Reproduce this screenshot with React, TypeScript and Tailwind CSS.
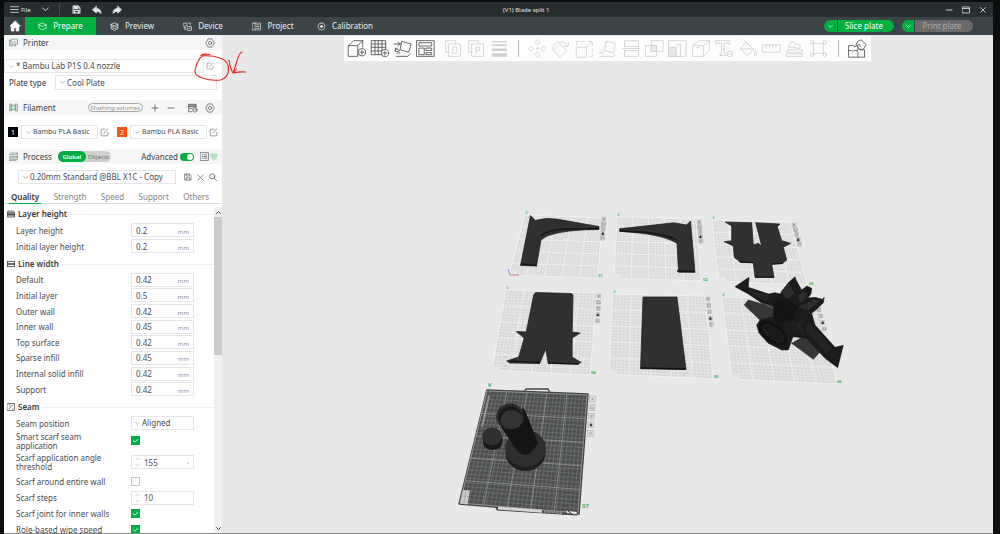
import React, { useId, useState } from "react";

type Pt = [number, number];

/* ---------- small drawing helpers ---------- */

function Icon({ children, className = "size-[10px]", vb = 16, sw = 1.2 }: { children: React.ReactNode; className?: string; vb?: number; sw?: number }) {
  return (
    <svg viewBox={`0 0 ${vb} ${vb}`} className={`shrink-0 ${className}`} fill="none" stroke="currentColor" strokeWidth={sw} strokeLinejoin="round" strokeLinecap="round" aria-hidden="true">
      {children}
    </svg>
  );
}

const Chevron = ({ className = "size-[6px] text-[#9a9a9a]" }: { className?: string }) => (
  <Icon className={className} vb={10} sw={1.3}><path d="M1 3l4 3.6L9 3" /></Icon>
);

const GearHex = () => (
  <Icon className="size-[10px]" sw={1.1}>
    <path d="M5 1.500h6l1.200 2L15 8l-2.800 4.500-1.200 2H5l-1.200-2L1 8l2.800-4.500z" />
    <circle cx="8" cy="8" r="2.600" />
  </Icon>
);

const EditIcon = ({ className = "size-[9px]" }: { className?: string }) => (
  <Icon className={className} sw={1.3}>
    <path d="M9 2H3.500Q2 2 2 3.500v9Q2 14 3.500 14h9q1.500 0 1.500-1.500V8" />
    <path d="M7 9l7-7.500" />
  </Icon>
);

const SaveIcon = ({ className, solid = false }: { className: string; solid?: boolean }) => (
  <Icon className={className} sw={solid ? 2 : 1.4}>
    <path d="M2 2h9l3 3v9H2z" />
    <path d="M4.500 2v4h6V2" fill={solid ? "currentColor" : "none"} />
    <path d="M4.500 14V9.500h7V14" />
  </Icon>
);

/* ---------- title bar and navigation ---------- */

function TitleBar() {
  return (
    <header className="relative flex h-[15px] shrink-0 items-center bg-[#262e30] px-[6px] text-[#e3e6e6]">
      <button className="flex items-center gap-[2px] text-[6px] leading-[10px]">
        <Icon className="size-[9px]" sw={1.4}><path d="M1 3h14M1 8h14M1 13h14" /></Icon>
        File
      </button>
      <button aria-label="More" className="ml-[11px]"><Chevron className="size-[7px]" /></button>
      <span className="ml-[10px] h-[11px] w-px bg-[#454c4e]" />
      <button aria-label="Save" className="ml-[12px]"><SaveIcon className="size-[9px]" solid /></button>
      <button aria-label="Undo" className="ml-[11px]">
        <Icon className="size-[10px]"><path d="M7 2.500v3q7 .2 7.500 8Q11 9.800 7 10v3L1 7.800z" fill="currentColor" /></Icon>
      </button>
      <button aria-label="Redo" className="ml-[10px]">
        <Icon className="size-[10px]"><path d="M9 2.500v3q-7 .2-7.500 8Q5 9.800 9 10v3l6-5.200z" fill="currentColor" /></Icon>
      </button>
      <h1 className="absolute left-[499px] text-[6px] leading-[10px]">(V1) Blade split 1</h1>
      <div className="ml-auto flex items-center gap-[9px]">
        <button aria-label="Minimise"><Icon className="size-[8px]"><path d="M3 8h11" strokeWidth="1.800" /></Icon></button>
        <button aria-label="Maximise"><Icon className="size-[8px]" sw={1.600}><path d="M1 2h14v12H1zM1 5h14" /></Icon></button>
        <button aria-label="Close"><Icon className="size-[8px]" sw={1.500}><path d="M3 3l10 10M13 3L3 13" /></Icon></button>
      </div>
    </header>
  );
}

const navItems = [
  { name: "Prepare", icon: <path d="M8 2l6.500 3v6L8 14l-6.500-3V5zM1.500 5L8 8l6.500-3" />, width: "w-[71px]" },
  { name: "Preview", icon: <path d="M2 4l6-2.500L14 4 8 6.500zM2 4v2.600L8 9l6-2.400V4M2 7v2.600L8 12l6-2.400V7M2 10v2.200L8 15l6-2.800V10" />, width: "w-[72px]" },
  { name: "Device", icon: <path d="M1 2h6v5H1zM3 10v3h3M10 2h3v3M9 8h6v7H9zM11 11h2M1.500 10h3" />, width: "w-[70px]" },
  { name: "Project", icon: <path d="M1 2h14v12H1zM5.500 2v12M8 5h4.500M8 8h4.500M8 11h4.500" />, width: "w-[70px]" },
  { name: "Calibration", icon: <><path d="M8 1l1.500 1.700 2.400-.3.500 2.300 2 1.300L13.500 8l.9 2-2 1.300-.5 2.300-2.400-.3L8 15l-1.500-1.700-2.400.3-.5-2.300-2-1.300.9-2-.9-2 2-1.300.5-2.300 2.400.3z" /><circle cx="8" cy="8" r="2" fill="currentColor" /></>, width: "w-[74px]" },
];

function NavBar() {
  const [active, setActive] = useState("Prepare");
  return (
    <nav className="flex h-[18px] shrink-0 items-stretch bg-[#3b4446] text-[8px] leading-[12px] text-[#eceeee]">
      <button aria-label="Home" className="grid w-[21px] place-items-center text-white">
        <Icon className="size-[12px]"><path d="M8 1.500L1.500 8H3v6.500h3.500V10h3v4.500H13V8h1.500z" fill="currentColor" /></Icon>
      </button>
      {navItems.map((n) => (
        <button key={n.name} onClick={() => setActive(n.name)} className={`flex items-center justify-center gap-[6px] ${n.width} ${active === n.name ? "bg-[#00ae42] text-white" : ""}`}>
          <Icon className="size-[9px]">{n.icon}</Icon>
          {n.name}
        </button>
      ))}
      <div className="ml-auto mr-[20px] flex items-center gap-[8px]">
        <div className="flex h-[12px] w-[70px] gap-px overflow-hidden rounded-full text-white">
          <button aria-label="Slice options" className="grid w-[13px] place-items-center bg-[#00ae42]"><Chevron className="size-[5px]" /></button>
          <button className="flex flex-1 items-center justify-center bg-[#00ae42] pr-[4px]">Slice plate</button>
        </div>
        <div className="flex h-[12px] w-[71px] gap-px overflow-hidden rounded-full">
          <button aria-label="Print options" className="grid w-[12px] place-items-center bg-[#00ae42] text-white"><Chevron className="size-[5px]" /></button>
          <button className="flex flex-1 items-center justify-center bg-[#6b6b6b] pr-[4px] text-[#a9a9a9]">Print plate</button>
        </div>
      </div>
    </nav>
  );
}

/* ---------- sidebar ---------- */

function PickBox({ label, value, className = "" }: { label: string; value: string; className?: string }) {
  return (
    <div className={`relative flex items-center border border-[#e6e6e6] bg-white ${className}`}>
      <span className="pointer-events-none absolute left-[4px]"><Chevron className="size-[5px] text-[#9a9a9a]" /></span>
      <select aria-label={label} className="h-full w-full appearance-none bg-transparent pl-[11px] outline-none">
        <option>{value}</option>
      </select>
    </div>
  );
}

function SectionBar({ icon, title, children }: { icon: React.ReactNode; title: string; children: React.ReactNode }) {
  return (
    <div className="flex h-[15px] items-center bg-[#f6f6f6] pl-[5px] pr-[7px] text-[#4f5557]">
      <span className="text-[#6f8577]">{icon}</span>
      <h2 className="ml-[5px] text-[8px] leading-[12px] text-[#3c4345]">{title}</h2>
      {children}
    </div>
  );
}

function Tick({ id, on }: { id: string; on: boolean }) {
  return (
    <span className="relative grid size-[9px] place-items-center">
      <input id={id} type="checkbox" defaultChecked={on} className="peer size-[9px] appearance-none border border-[#c4c4c4] bg-white checked:border-[#00ae42] checked:bg-[#00ae42]" />
      <span className="pointer-events-none absolute hidden text-white peer-checked:block">
        <Icon className="size-[7px]" vb={10} sw={1.2}><path d="M1.500 5l2.500 2.300L8.500 3.500" /></Icon>
      </span>
    </span>
  );
}

type Kind = "number" | "select" | "check" | "spin";

function Row({ label, kind, value = "", unit = "", on = false, height = "h-[16px]" }: { label: string; kind: Kind; value?: string; unit?: string; on?: boolean; height?: string }) {
  const id = useId();
  return (
    <div className={`flex items-center ${height}`}>
      <label htmlFor={id} className="w-[115px] shrink-0 text-[8px] leading-[9px] whitespace-nowrap">
        {label.split("|").map((part) => <span key={part} className="block">{part}</span>)}
      </label>
      {kind === "check" && <Tick id={id} on={on} />}
      {kind === "select" && (
        <div className="relative flex h-[14px] w-[63px] items-center border border-[#e6e6e6]">
          <span className="pointer-events-none absolute left-[3px]"><Chevron className="size-[5px] text-[#9a9a9a]" /></span>
          <select id={id} className="h-full w-full appearance-none bg-transparent pl-[10px] text-[8px] outline-none"><option>{value}</option></select>
        </div>
      )}
      {(kind === "number" || kind === "spin") && (
        <div className="flex h-[14px] w-[63px] items-center border border-[#e6e6e6] px-[4px]">
          {kind === "spin" && (
            <span className="mr-[4px] -ml-px flex flex-col gap-[2px] text-[#a8a8a8]">
              <Icon className="h-[4px] w-[5px]" vb={10} sw={1.6}><path d="M1 7l4-4 4 4" /></Icon>
              <Icon className="h-[4px] w-[5px]" vb={10} sw={1.6}><path d="M1 3l4 4 4-4" /></Icon>
            </span>
          )}
          <input id={id} defaultValue={value} className="h-full min-w-0 flex-1 bg-transparent text-[8px] outline-none" />
          <span className="pt-[3px] text-[6px] leading-[8px] text-[#929292]">{unit}</span>
        </div>
      )}
    </div>
  );
}

function GroupTitle({ icon, title }: { icon: React.ReactNode; title: string }) {
  return (
    <div className="flex h-[14px] items-center gap-[3px] pl-[3px] text-[#3a3a3a]">
      <Icon className="size-[8px]" sw={1.5}>{icon}</Icon>
      <h3 className="text-[8px] leading-[12px] font-semibold">{title}</h3>
      <span className="h-px flex-1 bg-[#f0f0f0]" />
    </div>
  );
}

const lineWidths: [string, string][] = [
  ["Default", "0.42"], ["Initial layer", "0.5"], ["Outer wall", "0.42"], ["Inner wall", "0.45"],
  ["Top surface", "0.42"], ["Sparse infill", "0.45"], ["Internal solid infill", "0.42"], ["Support", "0.42"],
];

function FilamentSlot({ n, swatch }: { n: string; swatch: string }) {
  return (
    <div className="flex w-[109px] shrink-0 items-center">
      <span className={`grid size-[10px] place-items-center text-[7px] leading-none text-white ${swatch}`}>{n}</span>
      <PickBox label={`Filament ${n}`} value="Bambu PLA Basic" className="ml-[3px] h-[14px] w-[77px] text-[7px]" />
      <button aria-label={`Edit filament ${n}`} className="ml-[2px] text-[#777]"><EditIcon className="size-[9px]" /></button>
    </div>
  );
}

function Sidebar() {
  const [tab, setTab] = useState("Quality");
  return (
    <aside className="flex w-[218px] shrink-0 flex-col bg-white text-[8px] text-[#4a4e50]">
      <SectionBar title="Printer" icon={<Icon className="size-[9px]"><path d="M4 2h11v9H4zM1 5h3M1 5v9h11v-3M6 9l3-3 3 2" /></Icon>}>
        <button aria-label="Printer settings" className="ml-auto"><GearHex /></button>
      </SectionBar>
      <div className="mt-[9px] flex h-[14px] items-center">
        <PickBox label="Printer" value="* Bambu Lab P1S 0.4 nozzle" className="h-[14px] w-[200px]" />
        <button aria-label="Edit printer" className="ml-[2px] text-[#888]"><EditIcon className="size-[8px]" /></button>
      </div>
      <div className="mt-[2px] flex h-[15px] items-center pl-[5px]">
        <span className="w-[46px] text-[#2f3436]">Plate type</span>
        <PickBox label="Plate type" value="Cool Plate" className="h-[15px] w-[162px]" />
      </div>

      <div className="mt-[10px]">
        <SectionBar title="Filament" icon={<Icon className="size-[9px]"><path d="M1 2h3v12H1zM12 2h3v12h-3zM4 4h8v8H4z" /><path d="M6.500 4v8M9.500 4v8" stroke="#7cc797" /></Icon>}>
          <button className="ml-auto flex h-[9px] items-center rounded-full border border-[#a8a8a8] px-[2px] text-[6px] leading-none whitespace-nowrap text-[#909090]">Flushing volumes</button>
          <button aria-label="Add filament" className="ml-[8px]"><Icon className="size-[8px]" sw={1.6}><path d="M8 2v12M2 8h12" /></Icon></button>
          <button aria-label="Remove filament" className="ml-[8px]"><Icon className="size-[8px]" sw={1.6}><path d="M2 8h12" /></Icon></button>
          <button aria-label="Sync filaments" className="ml-[13px]">
            <Icon className="size-[10px]"><path d="M1 2h12v4H1z" fill="currentColor" fillOpacity=".6" /><path d="M1 6v8h5M13 6v1M3 9h3" /><circle cx="11" cy="11" r="3.600" /><path d="M9.500 11.500l3-1.500" /></Icon>
          </button>
          <button aria-label="Filament settings" className="ml-[7px]"><GearHex /></button>
        </SectionBar>
      </div>
      <div className="mt-[10px] flex h-[14px] items-center pl-[4px]">
        <FilamentSlot n="1" swatch="bg-black" />
        <FilamentSlot n="2" swatch="bg-[#f9520b]" />
      </div>

      <div className="mt-[10px]">
        <SectionBar title="Process" icon={<Icon className="size-[9px]"><path d="M4 2h11l-3 3H1zM1 9l3-1h11l-3 2.500H1zM1 14l3-1h11l-3 2H1zM15 2v10" /></Icon>}>
          <div className="ml-[6px] flex h-[11px] w-[53px] shrink-0 items-center rounded-full bg-[#d0d0d0] text-[6px] leading-none">
            <button className="h-full w-[28px] rounded-full bg-[#00ae42] font-semibold text-white">Global</button>
            <button className="flex-1 text-[#777]">Objects</button>
          </div>
          <label htmlFor="advanced" className="ml-auto text-[#3c4345]">Advanced</label>
          <span className="relative ml-[2px] flex items-center">
            <input id="advanced" type="checkbox" role="switch" defaultChecked className="peer h-[8px] w-[14px] appearance-none rounded-full bg-[#bbb] checked:bg-[#00ae42]" />
            <span className="pointer-events-none absolute right-px size-[6px] rounded-full bg-white" />
          </span>
          <button aria-label="Parameter list" className="ml-[6px]"><Icon className="size-[9px]"><path d="M1 1h14v14H1zM4 5h1M7 5h5M4 8h1M7 8h5M4 11h1M7 11h5" /></Icon></button>
          <button aria-label="Compare" className="-mr-[3px] ml-[1px] text-[#5fc487]"><Icon className="size-[8px]"><path d="M1 2h5v4H1zM9 3h5v4H9zM2 10h4v4M9 10l4 4M13 9l-3 3M6 6l4 4" /></Icon></button>
        </SectionBar>
      </div>
      <div className="mt-[6px] flex h-[14px] items-center pl-[14px] text-[#5a5f61]">
        <PickBox label="Process preset" value="0.20mm Standard @BBL X1C - Copy" className="h-[14px] w-[158px] text-[#4a4e50]" />
        <button aria-label="Save preset" className="ml-[8px]"><SaveIcon className="size-[8px]" /></button>
        <button aria-label="Delete preset" className="ml-[5px]"><Icon className="size-[7px]" sw={1.6}><path d="M2 2l12 12M14 2L2 14" /></Icon></button>
        <button aria-label="Search" className="ml-[5px]"><Icon className="size-[8px]" sw={1.6}><circle cx="6.500" cy="6.500" r="5" /><path d="M10.500 10.500L15 15" /></Icon></button>
      </div>
      <div role="tablist" className="mt-[6px] flex h-[14px] justify-between border-b border-[#dcdcdc] pl-[5px] pr-[11px] text-[#858585]">
        {["Quality", "Strength", "Speed", "Support", "Others"].map((t) => (
          <button key={t} role="tab" aria-selected={tab === t} onClick={() => setTab(t)} className={`-mb-px h-[14px] px-[2px] ${tab === t ? "border-b border-[#00ae42] font-semibold text-[#333]" : ""}`}>{t}</button>
        ))}
      </div>

      <div className="mt-[3px] flex min-h-0 flex-1">
        <div className="h-full min-w-0 flex-1 overflow-hidden">
          <GroupTitle title="Layer height" icon={<path d="M3 2h10l2 4H1zM1 6h14v3H1zM1 9h14v5H1zM1 11.500h14" />} />
          <div className="mt-px pl-[12px]">
            <Row label="Layer height" kind="number" value="0.2" unit="mm" />
            <Row label="Initial layer height" kind="number" value="0.2" unit="mm" />
          </div>
          <div className="mt-[3px]"><GroupTitle title="Line width" icon={<path d="M1 3h14M1 7h14M1 9h14M1 13h14M1 3v4M15 3v4M1 9v4M15 9v4" />} /></div>
          <div className="mt-px flex h-[125px] flex-col justify-between pl-[12px]">
            {lineWidths.map(([l, v]) => <Row key={l} label={l} kind="number" value={v} unit="mm" />)}
          </div>
          <div className="mt-[3px]"><GroupTitle title="Seam" icon={<path d="M1 1h14v14H1zM4 12q2-1 3-4t5-4M4 4h2M11 12h1" strokeWidth="1.300" />} /></div>
          <div className="mt-px pl-[12px]">
            <Row label="Seam position" kind="select" value="Aligned" />
            <Row label="Smart scarf seam|application" kind="check" on height="h-[19px]" />
            <Row label="Scarf application angle|threshold" kind="spin" value="155" unit="°" height="h-[24px]" />
            <div className="flex h-[63px] flex-col justify-between">
              <Row label="Scarf around entire wall" kind="check" />
              <Row label="Scarf steps" kind="spin" value="10" />
              <Row label="Scarf joint for inner walls" kind="check" on />
              <Row label="Role-based wipe speed" kind="check" on />
            </div>
          </div>
        </div>
        <div className="flex w-[8px] shrink-0 flex-col items-center bg-[#f1f1f1] text-[#444]">
          <span className="grid h-[10px] place-items-center"><Icon className="size-[5px]" vb={10} sw={2}><path d="M1 7l4-4 4 4" /></Icon></span>
          <span className="h-[138px] w-full bg-[#cbcbcb]" />
          <span className="mt-auto grid h-[9px] place-items-center"><Icon className="size-[5px]" vb={10} sw={2}><path d="M1 3l4 4 4-4" /></Icon></span>
        </div>
      </div>
    </aside>
  );
}

/* ---------- toolbar ---------- */

const addTools: [string, React.ReactNode][] = [
  ["Add", <><path d="M2 8h11v13H2zM2 8l6-6h11l-6 6M19 2v8M13 19l2-2" /><circle cx="18" cy="16" r="4.500" fill="#fff" /><path d="M18 13.500v5M15.500 16h5" /></>],
  ["Add plate", <><path d="M2 2h17v17H2zM2 6h17M2 10h17M2 14.500h17M6 2v17M10 2v17M14.500 2v17" /><circle cx="18" cy="17" r="4.500" fill="#fff" /><path d="M18 14.500v5M15.500 17h5" /></>],
  ["Auto orient", <path d="M11 3l11 3-3 10-10-3zM1 6h8M6 4l3 2-3 2M8 14l-5-3v4h4M4 21h14l3-3M5 17h3M2 14l3-3" />],
  ["Arrange", <path d="M1 2h21v19H1zM4 4.500h15v4H4zM4 11h6v8H4zM12.500 11h6.500v3h-6.500zM12.500 16.500h6.500v2.500h-6.500z" />],
];
const plateTools: [string, React.ReactNode][] = [
  ["Split to objects", <><path d="M6 16H2V2h12v3M6 6h14v15H6z" /><path d="M11 9.500h4v8h-4z" /></>],
  ["Split to parts", <><path d="M6 16H2V2h12v3M6 6h14v15H6z" /><path d="M11 18V10h4v4h-4" /></>],
  ["Variable layer height", <path d="M3 3h17v.5H3zM3 7h17v1H3zM3 12h17v2H3zM3 18h17v3H3z" fill="currentColor" />],
];
const modelTools: [string, React.ReactNode][] = [
  ["Move", <path d="M11.500 1l3 3-3 3-3-3zM11.500 16l3 3-3 3-3-3zM1 11.500l3-3 3 3-3 3zM16 11.500l3-3 3 3-3 3zM11.500 10v3M10 11.500h3" />],
  ["Rotate", <path d="M11 6l8 8-8 8-8-8zM2 12C2 2 16 1 20 8M21 4v5h-5" />],
  ["Scale", <path d="M2 10h12v12H2zM14 10l6-6M16 3h5v5M2 7V3h3M8 3h4M21 12v3M21 18v3h-3" />],
  ["Lay flat", <path d="M10 3l11 2-2 12-11-3zM2 21h17l2-2M5 14l-3 3h5" />],
  ["Cut", <path d="M3 9V2h17v7M3 14v7h17v-7M1 11.500h21M3 9h17M3 14h17" />],
  ["Mesh boolean", <><path d="M1 8h13v13H1zM8 2h14v13H8z" /><path d="M8 8h6v7H8z" fill="currentColor" fillOpacity=".4" /></>],
  ["Resize", <><path d="M1 2h21v19H1z" /><path d="M1 10h9v11H1z" fill="currentColor" fillOpacity=".5" /><path d="M15 7v14M10 7h5" /></>],
  ["Supports", <path d="M1 8h13v13H1zM1 8l7-6h13l-7 6M21 2v12l-7 7M5 11l5-2" />],
  ["Text", <><path d="M1 2h17v4h-2V5h-5v13h2v2H6v-2h2V5H3v1H1z" /><circle cx="18" cy="18" r="3.500" /><path d="M16.500 18h3" /></>],
  ["Paint", <path d="M9 4l9 9-8 7-8-8zM2 12h16M6 1l6 7M20 14q3 6 0 7-3-1 0-7" />],
  ["Measure", <path d="M1 7h21v9H1zM5 7v4M9 7v3M13 7v4M17 7v3" />],
  ["Assembly", <path d="M3 13h18v3H3zM2 18h19v3H2zM4 10l4-7 6 3 5 2-2 4-6-2z" />],
  ["Simplify", <><path d="M5 5q6 2 13 0-2 6 0 13-7-2-13 0 2-7 0-13" /><circle cx="4" cy="4" r="2.200" /><circle cx="19" cy="4" r="2.200" /><circle cx="4" cy="19" r="2.200" /><circle cx="19" cy="19" r="2.200" /></>],
];

function Tool({ name, icon }: { name: string; icon: React.ReactNode }) {
  return (
    <button aria-label={name} className="grid size-[19px] place-items-center">
      <Icon className="size-[19px]" vb={23} sw={1}>{icon}</Icon>
    </button>
  );
}

function Toolbar() {
  return (
    <div role="toolbar" aria-label="Model tools" className="relative flex h-[25px] items-center bg-[#fdfdfd] pl-[3px] pr-[4px] text-[#4d4d4d]">
      <div className="flex gap-[4px]">{addTools.map(([n, i]) => <Tool key={n} name={n} icon={i} />)}</div>
      <div className="ml-[9px] flex gap-[4px] text-[#cfcfcf]">{plateTools.map(([n, i]) => <Tool key={n} name={n} icon={i} />)}</div>
      <span className="ml-[9px] h-[17px] w-px bg-[#b5b5b5]" />
      <div className="ml-[9px] flex w-[300px] justify-between text-[#cfcfcf]">{modelTools.map(([n, i]) => <Tool key={n} name={n} icon={i} />)}</div>
      <span className="ml-[10px] h-[17px] w-px bg-[#b5b5b5]" />
      <div className="ml-[9px]"><Tool name="Assembly view" icon={<path d="M1 8h6q1 3 3 0h2v5q-3 1 0 3v6H1zM12 22h8v-9h-6M1 14h3q2 2 3 0h4M12 3l4-2 6 6-4 6-5-1-3-5zM12 6q3 0 3 3" />} /></div>
    </div>
  );
}

/* ---------- 3D scene ---------- */

const mix = (a: Pt, b: Pt, t: number): Pt => [a[0] + (b[0] - a[0]) * t, a[1] + (b[1] - a[1]) * t];
const line = (a: Pt, b: Pt) => `M${a[0].toFixed(2)} ${a[1].toFixed(2)}L${b[0].toFixed(2)} ${b[1].toFixed(2)}`;

function gridPath([tl, tr, br, bl]: Pt[], n: number) {
  let d = "";
  for (let i = 0; i <= n; i++) {
    const t = i / n;
    d += line(mix(tl, tr, t), mix(bl, br, t)) + line(mix(tl, bl, t), mix(tr, br, t));
  }
  return d;
}

const plates: { q: Pt[]; label: string; at: Pt; tools: Pt; step: Pt }[] = [
  { q: [[525, 215], [603, 218], [597, 278], [509, 275]], label: "01", at: [598, 277], tools: [604, 219], step: [-0.4, 4.800] },
  { q: [[617, 217], [696, 219], [701, 281], [614, 278]], label: "02", at: [703, 281], tools: [699, 222], step: [0.5, 4.800] },
  { q: [[712, 220], [790, 222], [807, 285], [719, 281]], label: "03", at: [809, 285], tools: [794, 225], step: [1.4, 4.800] },
  { q: [[506, 290], [597, 293], [590, 375], [492, 370]], label: "04", at: [591, 374], tools: [599, 296], step: [-0.4, 6.200] },
  { q: [[613, 294], [705, 296], [713, 379], [609, 374]], label: "05", at: [714, 378], tools: [708, 299], step: [0.8, 6.400] },
  { q: [[722, 297], [816, 300], [837, 384], [732, 379]], label: "06", at: [837, 383], tools: [817, 303], step: [1.9, 6.500] },
];

function PlateTools({ at, step, size }: { at: Pt; step: Pt; size: number }) {
  return (
    <g>
      {[0, 1, 2, 3, 4].map((i) => (
        <g key={i} transform={`translate(${at[0] + step[0] * i} ${at[1] + step[1] * i})`}>
          <rect x={-size / 2} y={-size / 2} width={size} height={size} fill="#dedede" stroke="#a5a5a5" strokeWidth=".5" />
          {i === 0 && <path d="M-1.200-1.200L1.200 1.200M1.200-1.200L-1.200 1.200" stroke="#666" strokeWidth=".5" />}
          {i === 1 && <path d="M-1.300-1h2l.8.8v1.500h-2.800z" fill="none" stroke="#777" strokeWidth=".5" />}
          {i === 2 && <path d="M-1.300-1h2.600M-1.300 0h2.600M-1.300 1h2.600" stroke="#888" strokeWidth=".5" />}
          {i === 3 && <path d="M-1.200-.2h2.400v1.700h-2.400zM-.7-.2v-1h1.400v1z" fill="#333" />}
          {i === 4 && <circle r="1.100" fill="none" stroke="#888" strokeWidth=".6" />}
        </g>
      ))}
    </g>
  );
}

function Scene() {
  const dark: Pt[] = [[487, 391], [587, 395], [578, 513], [460, 503]];
  return (
    <svg viewBox="222 35 771 498" preserveAspectRatio="xMidYMin slice" className="absolute inset-0 size-full" role="img" aria-label="Build plates with models">
      {plates.map((p) => (
        <g key={p.label}>
          <polygon points={p.q.join(" ")} fill="#d8d8d8" />
          <path d={gridPath(p.q, 27)} stroke="#ebebeb" strokeWidth=".6" fill="none" />
          <path d={gridPath(p.q, 5)} stroke="#f4f4f4" strokeWidth=".7" fill="none" />
          <polygon points={`${p.q[3][0] - 1},${p.q[3][1] - 4} ${p.q[3][0] + 7},${p.q[3][1] - 4} ${p.q[3][0] + 8},${p.q[3][1] + 1} ${p.q[3][0] - 1},${p.q[3][1] + 1}`} fill="#e8e8e8" />
          <path d={`M${p.q[0][0] + 1} ${p.q[0][1] - 2}l2-2M${p.q[0][0] + 1} ${p.q[0][1] - 3.500}v2h1.500`} stroke="#4cc27c" strokeWidth=".6" fill="none" />
          <text x={p.at[0]} y={p.at[1]} fontSize="4" fontWeight="600" fill="#10ad4c" fontFamily="Noto Sans, sans-serif">{p.label}</text>
          <PlateTools at={p.tools} step={p.step} size={3.800} />
        </g>
      ))}
      <path d="M510 275h9" stroke="#d05050" strokeWidth=".7" />
      <path d="M510 275l-2-6" stroke="#5a6acb" strokeWidth=".7" />

      {/* flat parts */}
      <g fill="#303030" stroke="#1d1d1d" strokeWidth=".7" strokeLinejoin="round">
        <path d="M530.500 215.500l5 5 4-1 7-1 10 .5 42.500 7.500v3q-35 0-52 6.500l-6 4-4.500 26-16-.5z" />
        <path d="M690.500 221l-4 4-8-1.500-5-.7-54 6v2.500q42 2.500 57.500 12l1.500 29h16.500z" />
        <path d="M725.300 222l26.400.7 1.600 22.300 5-1.700 3.400 2.700-6-23.300 24.300 1.300-2.700 2.700 4.400 14 9 2.600-7.400 4 3.400 12.700-4 3.300-11 .7 2.300 13.300h-19l-1.700-14.600-13.300-.7-5.700-4.700-1-11.300-9-4.300 7.400-1V226z" />
        <path d="M535.500 292.500l35.500 1q2 .5 2 2l-.8 36.500 8 1-8 5v19l9 5.500-4 1.500-29-.5-2.500-14.500-6 14.500-30-.5-3-2 12-4 5.500-19-8-6.500 10 .5 7.500-37z" />
        <path d="M643 297h34l9 72.500-45.500-.8z" />
      </g>
      <path d="M510 361l30 1.500M548 363l31 1M755 277l19 .3M740 262l13 .6M772 264l11-.7" stroke="#171717" strokeWidth="1.300" />
      <path d="M521 264l16 1.500M677 271l17 .5M641 368l45 1" stroke="#131313" strokeWidth="1.500" />
      <path d="M541 235q9-5 21-6l37-.3M677 240q-14-6-30-7.500l-27-1.500" stroke="#151515" strokeWidth="1.300" fill="none" />

      {/* assembled model */}
      <g stroke="#111" strokeWidth=".5" strokeLinejoin="round">
        <path d="M748.300 300l-4 5 15.700 15 10-2 14-8z" fill="#363636" />
        <path d="M791.700 343.300l21.600 16 6.700-7.600-13.300-17z" fill="#363636" />
        <path d="M735 286.700l14-9.400-.7 10 20 6.700 6.700-1.300 5 1.300 8.300-11.300 6.700-6 1 3.300 5.700 10 5-4 5 2.300-.7 5.700-3 4 7-.7 7.300 2 2-2-1 5.400-8.300 8-3.300 2.600 3.300 11.700 20 22.300 8.300-2-5.600 22.400-12.700-9.400-18.300-20-13.700-1.600-4.700 13.300h-6.600l-13.700-7-9-10-2.300-8 3.300-5 13-3.300 1.300-10-12.600-3.700-13.400-9z" fill="#1b1b1b" />
        <path d="M748 288l22 7-2 8-20-10zM808 320l25 28-6 7-22-24z" fill="#242424" />
        <ellipse cx="773" cy="333" rx="16" ry="9" transform="rotate(34 773 333)" fill="#121212" />
        <ellipse cx="773" cy="333" rx="12" ry="5.500" transform="rotate(38 773 333)" fill="#191919" stroke="#333" />
        <path d="M781 292l8-9 6 10-8 8zM797 296l6-5 6 4-8 9zM796 307l18-8 8 1-14 11z" fill="#2c2c2c" />
        <path d="M773 302l14-4 10 9-5 14-16 2zM786 312l12 11M780 302l8 16" fill="#151515" />
        <path d="M788 283l7 13M795 302l12-8M797 325l8-6M803 309l17-8M793 331l6-5 5 4" stroke="#373737" fill="none" />
        <path d="M791 322l8 4 5 8" stroke="#343434" fill="none" />
        <path d="M766 305l7 3" stroke="#8a8a8a" fill="none" />
      </g>

      {/* active plate */}
      <path d="M524 392l2-3h22l2 4" fill="none" stroke="#444" strokeWidth="1.300" />
      <path d="M495 506l2 4 80 5 3-3" fill="#505050" stroke="#3c3c3c" strokeWidth="1" />
      <polygon points="487,390 588,394 579,514 459,504" fill="#4d4f4f" stroke="#434545" strokeWidth="1.500" strokeLinejoin="round" />
      <path d={gridPath(dark, 27)} stroke="#858787" strokeWidth=".45" fill="none" />
      <path d={gridPath(dark, 5)} stroke="#a9abab" strokeWidth=".6" fill="none" />
      <path d="M489 396l-7 31" stroke="#a7a9a9" strokeWidth="2" strokeDasharray="1.500 .6" />
      <path d="M463 490l7 .5-2.500 14-7.500-1z" fill="#c9c9c9" /><path d="M466 490l-2 13M462 496l7 .6" stroke="#999" strokeWidth=".5" />
      <path d="M498 508l44 3.300" stroke="#d4d4d4" strokeWidth="3" />
      <path d="M544 511.500l18 1.500" stroke="#8b8b8b" strokeWidth="2" strokeDasharray="2 .7" />
      <path d="M565 510.500l12 1v3l-10-1z" fill="#eee" stroke="#333" strokeWidth=".6" /><path d="M568 511l4 3" stroke="#333" />
      <path d="M489 386l3-3M489 383v3h2" stroke="#10ad4c" strokeWidth=".8" fill="none" />
      <text x="582" y="508" fontSize="6" fontWeight="600" fill="#10ad4c" fontFamily="Noto Sans, sans-serif">07</text>
      <PlateTools at={[592.5, 399]} step={[-0.5, 8.600]} size={5.800} />
      <ellipse cx="525.500" cy="453" rx="20" ry="18" fill="#1e1e1e" />
      <ellipse cx="525.500" cy="448.500" rx="20.500" ry="18.500" fill="#2e2e2e" />
      <path d="M499 424l19 28q9 7 16-3l4-6-14-35z" fill="#151515" />
      <ellipse cx="510" cy="416.500" rx="13.800" ry="13" fill="#2b2b2b" />
      <ellipse cx="510.500" cy="417.500" rx="11.800" ry="11" fill="#171717" />
      <ellipse cx="511.500" cy="419.500" rx="11" ry="9.500" fill="#333" />
      <path d="M483 437v6q1 7 10 7 9-1 9.500-8v-5z" fill="#171717" />
      <ellipse cx="492" cy="436.500" rx="9.800" ry="9" fill="#303030" />
    </svg>
  );
}

export default function App() {
  return (
    <div className="flex h-screen flex-col bg-[#0b0d0e] pt-[2px] pr-[7px] pl-[4px] font-['Noto_Sans','Open_Sans',sans-serif]">
      <TitleBar />
      <NavBar />
      <div className="relative flex min-h-0 flex-1 border-b border-[#8a8a8a]">
        <Sidebar />
        <main className="relative flex min-w-0 flex-1 items-start justify-center overflow-hidden bg-[#e8e8e8] pt-px">
          <Scene />
          <Toolbar />
        </main>
        <svg className="pointer-events-none absolute top-[15px] left-[186px]" width="64" height="34" viewBox="190 50 64 34" fill="none" stroke="#e8261f" strokeWidth="1.100" strokeLinecap="round" strokeLinejoin="round" aria-hidden="true">
          <path d="M210 54.500q-7-1-9 1M202 56q10-1 18 2 9 3 8.500 12-.5 8-8 10-10 1-18-2-8-2-7.500-8 1-6 5-12 2-2 5-2.500" />
          <path d="M242 52q-3 1-5 9l-3.500 11M229 60q1 8 4 13M233.500 73l3-4M233.500 73q6-1.500 12-1" />
        </svg>
      </div>
    </div>
  );
}
